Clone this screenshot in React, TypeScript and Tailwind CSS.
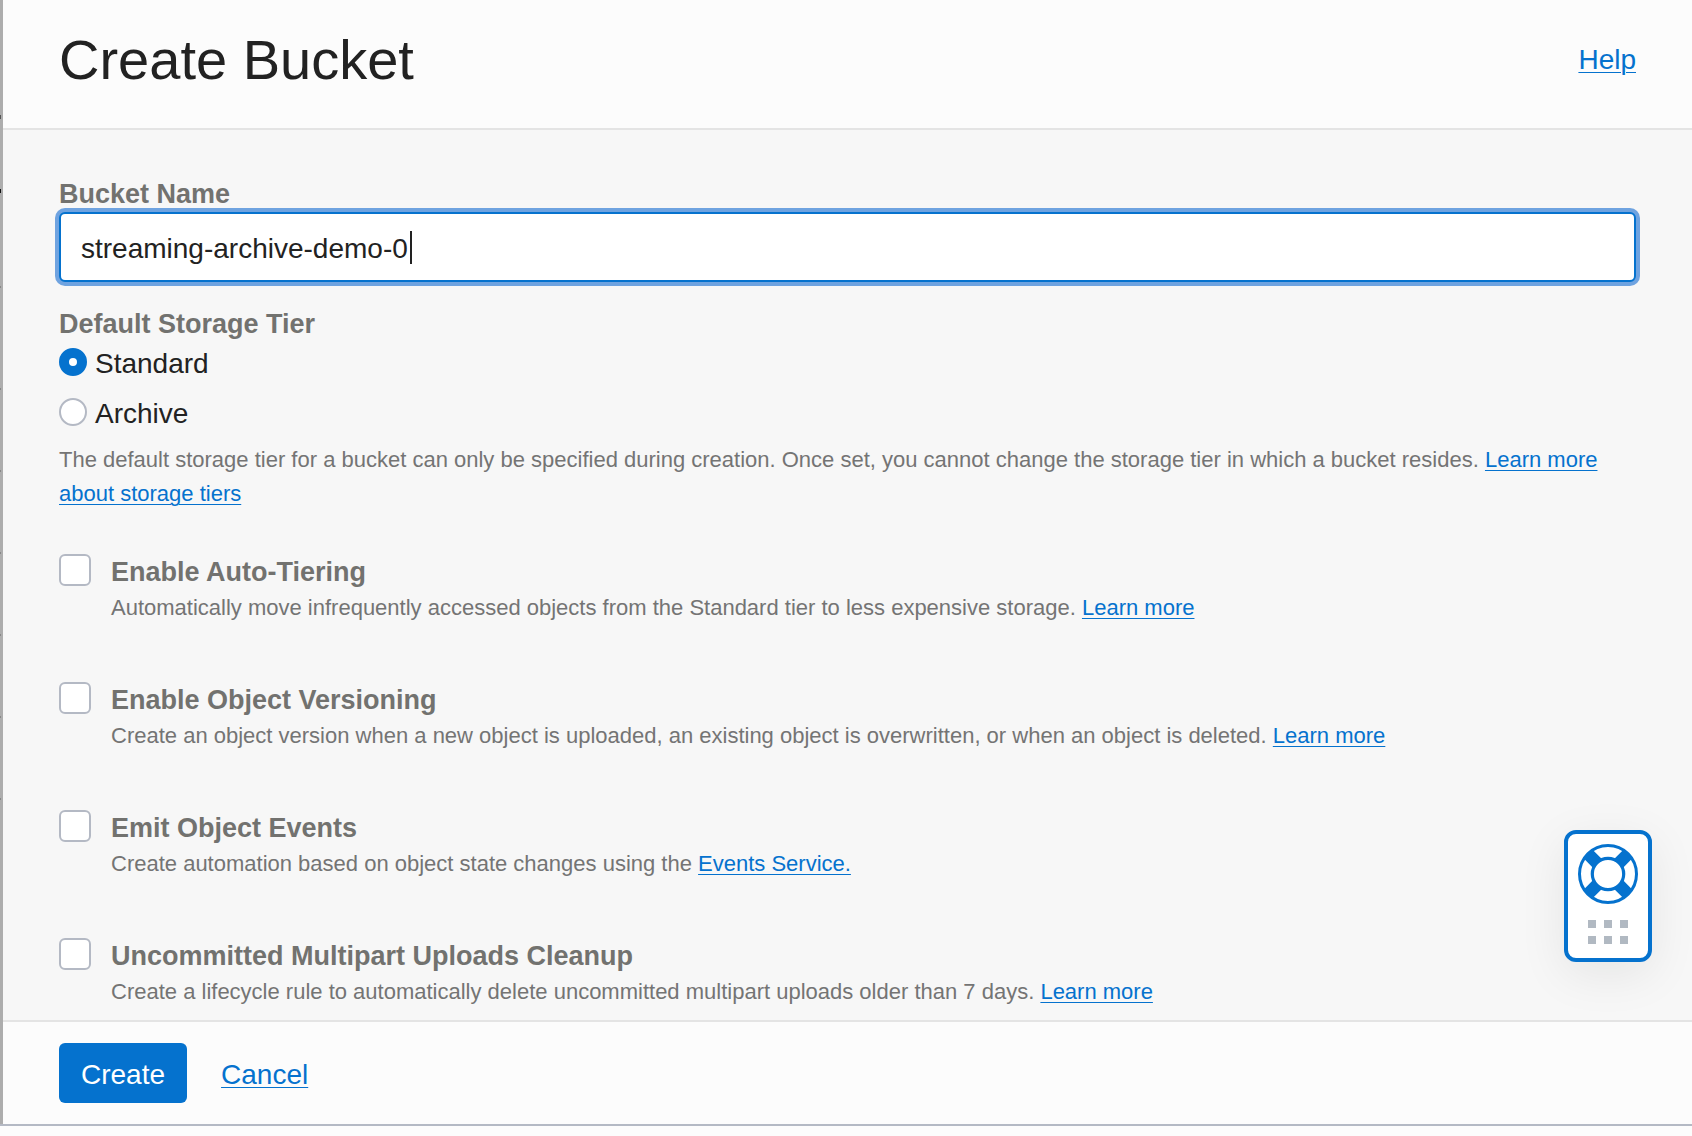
import React, { useState } from "react";

type Option = {
  id: string;
  title: string;
  text: string;
  link: string;
};

const options: Option[] = [
  {
    id: "auto-tiering",
    title: "Enable Auto-Tiering",
    text: "Automatically move infrequently accessed objects from the Standard tier to less expensive storage.",
    link: "Learn more",
  },
  {
    id: "versioning",
    title: "Enable Object Versioning",
    text: "Create an object version when a new object is uploaded, an existing object is overwritten, or when an object is deleted.",
    link: "Learn more",
  },
  {
    id: "events",
    title: "Emit Object Events",
    text: "Create automation based on object state changes using the",
    link: "Events Service.",
  },
  {
    id: "cleanup",
    title: "Uncommitted Multipart Uploads Cleanup",
    text: "Create a lifecycle rule to automatically delete uncommitted multipart uploads older than 7 days.",
    link: "Learn more",
  },
];

function TextLink({ children }: { children: React.ReactNode }) {
  return (
    <a href="#" className="text-[#0572ce] underline decoration-1 underline-offset-[3px]">
      {children}
    </a>
  );
}

function TierRadio({ label, checked, onSelect }: { label: string; checked: boolean; onSelect: () => void }) {
  return (
    <label className="flex items-start gap-2 text-[28px] leading-[38px] text-[#222]">
      <input
        type="radio"
        name="tier"
        checked={checked}
        onChange={onSelect}
        className="mt-[3px] size-7 shrink-0 appearance-none rounded-full border-2 border-[#b4b9c4] bg-white checked:border-[10px] checked:border-[#0572ce]"
      />
      {label}
    </label>
  );
}

function OptionRow({ option }: { option: Option }) {
  return (
    <div className="flex items-start gap-5">
      <input
        id={option.id}
        type="checkbox"
        className="size-8 shrink-0 appearance-none rounded-md border-2 border-[#b4b9c4] bg-white checked:bg-[#0572ce]"
      />
      <div>
        <label htmlFor={option.id} className="block text-[27px] leading-9 font-bold text-[#72726f]">
          {option.title}
        </label>
        <p className="text-[22px] leading-9 text-[#747474]">
          {option.text} <TextLink>{option.link}</TextLink>
        </p>
      </div>
    </div>
  );
}

function LifeRing() {
  return (
    <svg width="60" height="60" viewBox="0 0 60 60" fill="none" stroke="#0572ce" aria-hidden="true">
      <path
        d="M10.2 10.2L19 19M49.8 10.2L41 19M10.2 49.8L19 41M49.8 49.8L41 41"
        strokeWidth="12.4"
      />
      <circle cx="30" cy="30" r="28.5" strokeWidth="3" />
      <circle cx="30" cy="30" r="15.7" strokeWidth="3.2" fill="#fff" />
    </svg>
  );
}

export default function App() {
  const [tier, setTier] = useState("Standard");
  const [name, setName] = useState("streaming-archive-demo-0");

  return (
    <div className="flex min-h-screen flex-col bg-[#fcfcfc] pb-[10px] font-['Liberation_Sans',Arial,sans-serif]">
      <form
        className="relative flex flex-1 flex-col border-b-2 border-[#b4b9c4]"
        onSubmit={(e) => e.preventDefault()}
      >
        <div className="flex flex-1">
          {/* Edge of the dimmed page behind the panel */}
          <div className="relative w-[3px] shrink-0 bg-[#adadad]">
            <i className="absolute top-[115px] left-0 h-1 w-px bg-[#555]" />
            <i className="absolute top-[189px] left-0 h-1 w-px bg-[#111]" />
            <i className="absolute top-[286px] left-0 h-0.5 w-px bg-[#888]" />
            <i className="absolute top-[388px] left-0 h-0.5 w-px bg-[#888]" />
            <i className="absolute top-[470px] left-0 h-0.5 w-px bg-[#888]" />
            <i className="absolute top-[552px] left-0 h-0.5 w-px bg-[#888]" />
            <i className="absolute top-[634px] left-0 h-0.5 w-px bg-[#888]" />
            <i className="absolute top-[716px] left-0 h-0.5 w-px bg-[#888]" />
            <i className="absolute top-[798px] left-0 h-0.5 w-px bg-[#888]" />
          </div>

          <div className="flex min-w-0 flex-1 flex-col">
            <header className="flex items-center justify-between border-b-2 border-[#e4e4e4] px-14 pt-7 pb-9">
              <h1 className="text-[56px] leading-[64px] text-[#222]">Create Bucket</h1>
              <span className="text-[28px] leading-[34px]">
                <TextLink>Help</TextLink>
              </span>
            </header>

            <main className="flex-1 bg-[#f7f7f7] px-14 pt-[46px] pb-[10px]">
              <label htmlFor="bucket-name" className="block text-[27px] leading-9 font-bold text-[#72726f]">
                Bucket Name
              </label>
              <div className="relative">
                <input
                  id="bucket-name"
                  type="text"
                  value={name}
                  onChange={(e) => setName(e.target.value)}
                  className="block h-[70px] w-full rounded-md border-2 border-[#0572ce] bg-white px-5 pt-1 text-[28px] text-[#222] ring-4 ring-[#6fa3e0] outline-none"
                />
                <span className="absolute top-[19px] left-[351px] h-[33px] w-0.5 bg-[#222]" />
              </div>

              <fieldset className="mt-6">
                <legend className="block text-[27px] leading-9 font-bold text-[#72726f]">Default Storage Tier</legend>
                <div className="flex flex-col items-start gap-3 pt-[3px]">
                  <TierRadio label="Standard" checked={tier === "Standard"} onSelect={() => setTier("Standard")} />
                  <TierRadio label="Archive" checked={tier === "Archive"} onSelect={() => setTier("Archive")} />
                </div>
              </fieldset>
              <p className="mt-[10px] text-[22px] leading-[34px] text-[#747474]">
                The default storage tier for a bucket can only be specified during creation. Once set, you cannot change
                the storage tier in which a bucket resides. <TextLink>Learn more about storage tiers</TextLink>
              </p>

              <div className="mt-[43px] flex flex-col gap-14">
                {options.map((option) => (
                  <OptionRow key={option.id} option={option} />
                ))}
              </div>
            </main>

            <footer className="flex items-center gap-[34px] border-t-2 border-[#e4e4e4] px-14 py-[21px] text-[28px] leading-9">
              <button type="submit" className="h-[60px] rounded-md bg-[#0572ce] px-[22px] pt-1 text-white">
                Create
              </button>
              <span className="pt-1">
                <TextLink>Cancel</TextLink>
              </span>
            </footer>
          </div>
        </div>

        <button
          type="button"
          aria-label="Support"
          className="absolute right-10 bottom-[162px] flex h-[132px] w-[88px] flex-col items-center gap-4 rounded-xl border-4 border-[#0572ce] bg-white pt-[10px] shadow-[0_12px_48px_rgba(0,20,10,0.08)]"
        >
          <LifeRing />
          <span className="grid grid-cols-3 gap-2">
            {[0, 1, 2, 3, 4, 5].map((dot) => (
              <span key={dot} className="size-2 bg-[#b1b9c2]" />
            ))}
          </span>
        </button>
      </form>
    </div>
  );
}
